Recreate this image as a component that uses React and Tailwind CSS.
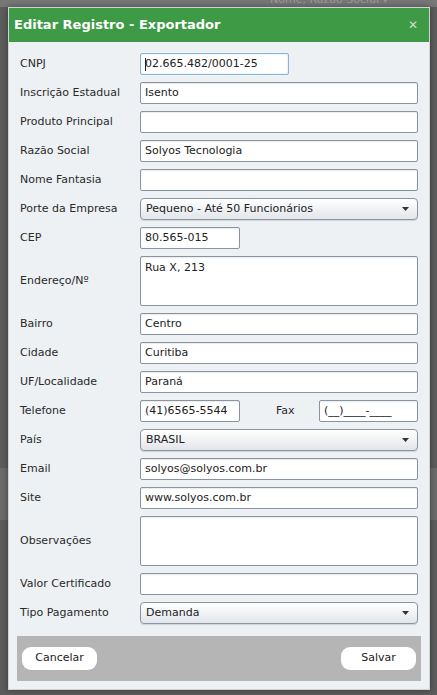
const font = { fontFamily: '"DejaVu Sans", Verdana, sans-serif' };

function Field({ value = "", className = "", focused = false }) {
  return (
    <div
      className={`flex h-[22px] items-center rounded-[2px] border bg-white px-[4px] text-[11px] text-[#222] ${
        focused
          ? "border-[#86b6d2] shadow-[inset_0_0_2px_rgba(80,140,180,0.35)]"
          : "border-[#8795a2] shadow-[inset_0_1px_1px_rgba(0,0,0,0.08)]"
      } ${className}`}
    >
      {focused && <span className="mr-[-1px] h-[13px] w-px bg-[#222]" />}
      {value}
    </div>
  );
}

function Area({ value = "" }) {
  return (
    <div className="h-[50px] flex-1 rounded-[2px] border border-[#8795a2] bg-white px-[4px] pt-[3px] text-[11px] text-[#222] shadow-[inset_0_1px_1px_rgba(0,0,0,0.08)]">
      {value}
    </div>
  );
}

function Select({ value }) {
  return (
    <div className="flex h-[22px] flex-1 items-center justify-between rounded-[4px] border border-[#8a95a1] bg-gradient-to-b from-white to-[#e2e5e9] pl-[5px] pr-[8px] text-[11px] text-[#222] shadow-[0_1px_1px_rgba(0,0,0,0.12)]">
      <span>{value}</span>
      <svg width="7" height="4" viewBox="0 0 7 4">
        <path d="M0 0h7L3.5 4z" fill="#333" />
      </svg>
    </div>
  );
}

function Row({ label, children, tall = false }) {
  return (
    <div className={`flex items-center ${tall ? "h-[50px]" : "h-[22px]"}`}>
      <div className="w-[120px] shrink-0 text-[11px] text-[#2a2a2a]">{label}</div>
      <div className="flex flex-1 items-center">{children}</div>
    </div>
  );
}

export default function App() {
  return (
    <div className="relative h-[695px] w-[437px] overflow-hidden bg-[#5c5c5c]" style={font}>
      <div className="absolute left-0 top-0 h-[7px] w-full bg-[#777]" />
      <div className="absolute left-[270px] top-[-7px] text-[11px] leading-[13px] text-[#9a9a9a]">Nome, Razão Social ▾</div>
      <div className="absolute left-0 top-[468px] h-[52px] w-full bg-[#6b6b6b]" />

      <div className="relative ml-[8px] pt-[7px]">
        <div className="w-[422px] border border-[#cfd4d9] bg-[#eef1f4] shadow-[0_0_6px_rgba(0,0,0,0.4)]">
          <div className="flex h-[34px] items-center justify-between bg-[#3e9a45] pl-[5px] pr-[11px]">
            <span className="text-[13px] font-bold text-white">Editar Registro - Exportador</span>
            <span className="text-[12px] leading-none text-[#cfdccf]">✕</span>
          </div>

          <div className="flex flex-col gap-[7px] px-[11px] pt-[11px]">
            <Row label="CNPJ">
              <Field value="02.665.482/0001-25" focused className="w-[149px]" />
            </Row>
            <Row label="Inscrição Estadual">
              <Field value="Isento" className="flex-1" />
            </Row>
            <Row label="Produto Principal">
              <Field className="flex-1" />
            </Row>
            <Row label="Razão Social">
              <Field value="Solyos Tecnologia" className="flex-1" />
            </Row>
            <Row label="Nome Fantasia">
              <Field className="flex-1" />
            </Row>
            <Row label="Porte da Empresa">
              <Select value="Pequeno - Até 50 Funcionários" />
            </Row>
            <Row label="CEP">
              <Field value="80.565-015" className="w-[100px]" />
            </Row>
            <Row label="Endereço/Nº" tall>
              <Area value="Rua X, 213" />
            </Row>
            <Row label="Bairro">
              <Field value="Centro" className="flex-1" />
            </Row>
            <Row label="Cidade">
              <Field value="Curitiba" className="flex-1" />
            </Row>
            <Row label="UF/Localidade">
              <Field value="Paraná" className="flex-1" />
            </Row>
            <Row label="Telefone">
              <Field value="(41)6565-5544" className="w-[100px]" />
              <span className="ml-[36px] w-[43px] text-[11px] text-[#2a2a2a]">Fax</span>
              <Field value="(__)____-____" className="flex-1" />
            </Row>
            <Row label="País">
              <Select value="BRASIL" />
            </Row>
            <Row label="Email">
              <Field value="solyos@solyos.com.br" className="flex-1" />
            </Row>
            <Row label="Site">
              <Field value="www.solyos.com.br" className="flex-1" />
            </Row>
            <Row label="Observações" tall>
              <Area />
            </Row>
            <Row label="Valor Certificado">
              <Field className="flex-1" />
            </Row>
            <Row label="Tipo Pagamento">
              <Select value="Demanda" />
            </Row>
          </div>

          <div className="mx-[8px] mb-[8px] mt-[12px] flex h-[45px] items-center justify-between bg-[#b5b5b5] px-[5px]">
            <button className="h-[23px] w-[75px] rounded-[9px] bg-white text-[11px] text-[#222]">Cancelar</button>
            <button className="h-[23px] w-[75px] rounded-[9px] bg-white text-[11px] text-[#222]">Salvar</button>
          </div>
        </div>
      </div>
    </div>
  );
}
